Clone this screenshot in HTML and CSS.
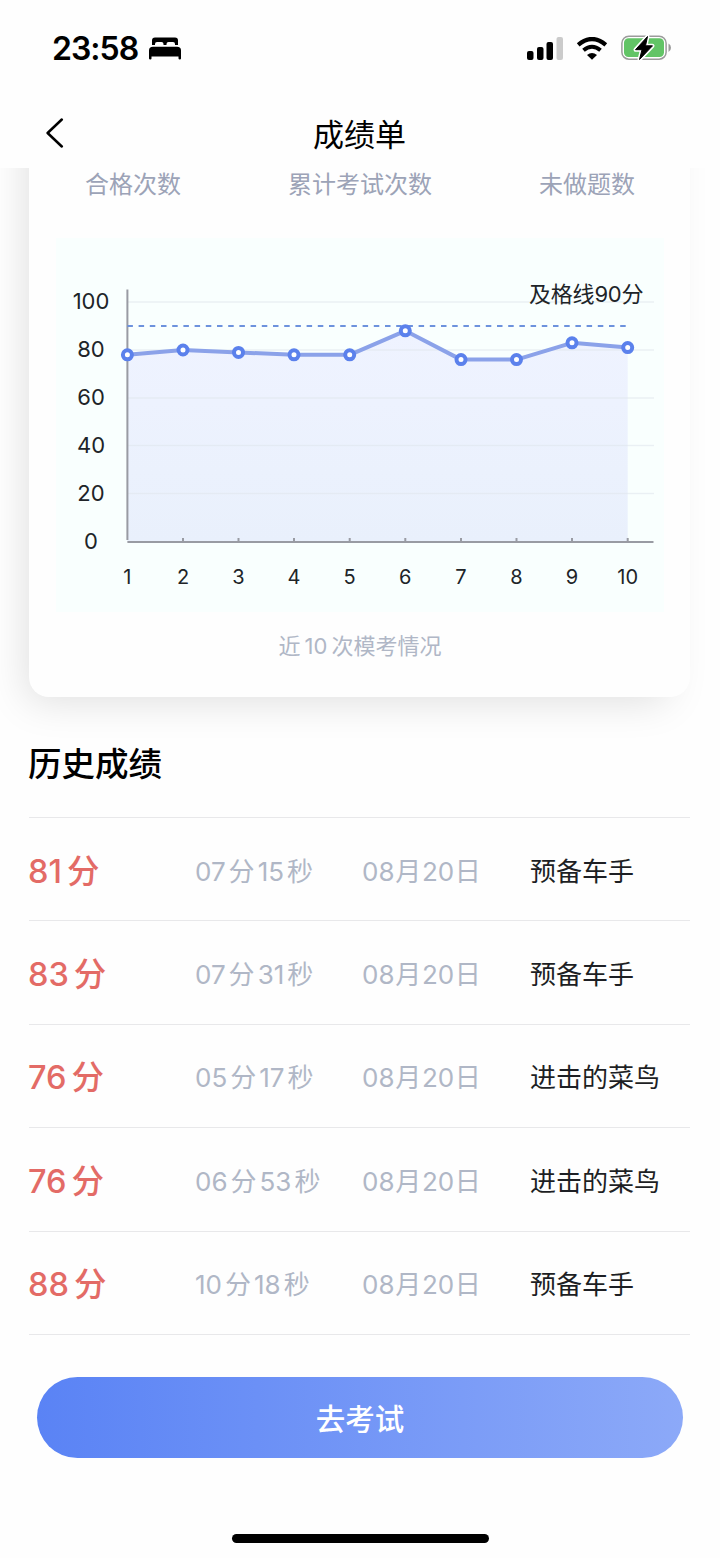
FILE: index.html
```html
<!DOCTYPE html>
<html lang="zh-CN">
<head>
    <meta charset="UTF-8">
    <meta name="viewport" content="width=device-width, initial-scale=1.0">
    <title>成绩单</title>
    <link rel="stylesheet" href="styles.css">
</head>
<body>
    <div class="status-bar">
        <div class="status-left">
            <span class="time">23:58</span>
            <svg width="32" height="23" viewBox="0 0 32 23">
                <path d="M3 8V3.500Q3 .5 6 .5H26Q29 .5 29 3.500V8H26V7Q26 5 24 5H19.500Q17.500 5 17.500 7V8H14.500V7Q14.500 5 12.500 5H8Q6 5 6 7V8Z"/>
                <path d="M4 9.800H28Q32 9.800 32 13.500V21.500Q32 22.500 30.800 22.500T29.500 21.500V19.500H2.500V21.500Q2.500 22.500 1.300 22.500T0 21.500V13.500Q0 9.800 4 9.800Z"/>
            </svg>
        </div>
        <div class="status-right">
            <svg width="36" height="23" viewBox="0 0 36 23">
                <rect x="0" y="14" width="6.500" height="9" rx="2"/>
                <rect x="10" y="10" width="6.500" height="13" rx="2"/>
                <rect x="19.500" y="5" width="6.500" height="18" rx="2"/>
                <rect x="29.500" y="0" width="6.500" height="23" rx="2" fill="#cbcbcb"/>
            </svg>
            <svg width="32" height="23" viewBox="0 0 32 23">
                <path d="M2.200 7.800Q16 -3.800 29.800 7.800" fill="none" stroke="#000" stroke-width="4.200"/>
                <path d="M7.500 13.300Q16 6.300 24.500 13.300" fill="none" stroke="#000" stroke-width="4"/>
                <path d="M16 22.800L11 18Q16 14 21 18Z"/>
            </svg>
            <svg width="50" height="28" viewBox="0 0 50 28">
                <rect x=".9" y="2.200" width="44.200" height="23" rx="7" fill="#fff" stroke="#9b9b9b" stroke-width="1.500"/>
                <rect x="3" y="4.300" width="40" height="18.800" rx="4.500" fill="#62c466"/>
                <path d="M47.500 9.500V18Q50 16.500 50 13.750T47.500 9.500Z" fill="#9b9b9b"/>
                <path d="M26.500 2.500L14.500 15.700H21L18.500 25.500L31.500 11.800H24.500Z" stroke="#fff" stroke-width="4" stroke-linejoin="round"/>
                <path d="M26.500 2.500L14.500 15.700H21L18.500 25.500L31.500 11.800H24.500Z" stroke="#000" stroke-linejoin="round"/>
            </svg>
        </div>
    </div>

    <div class="nav-bar">
        <svg class="back" width="18" height="30" viewBox="0 0 18 30">
            <path d="M15.800 1.500L1.600 15L15.800 28.500" fill="none" stroke="#000" stroke-width="2.500" stroke-linecap="round" stroke-linejoin="round"/>
        </svg>
        <h1>成绩单</h1>
    </div>

    <div class="summary">
        <div class="card">
            <div class="labels">
                <span>合格次数</span>
                <span>累计考试次数</span>
                <span>未做题数</span>
            </div>
            <svg class="chart" width="608" height="374" viewBox="56 238 608 374">
                <defs>
                    <linearGradient id="area" x1="0" y1="0" x2="0" y2="1">
                        <stop offset="0" stop-color="#eff3ff"/>
                        <stop offset="1" stop-color="#e9f0fc"/>
                    </linearGradient>
                </defs>
                <path fill="url(#area)" d="M127.400 354.800L183 350L238.500 352.400L294 354.800H349.700L405.300 330.800L461 359.600H516.500L572 342.800L627.700 347.600V542H127.400Z"/>
                <path class="grid" d="M128 302H654M128 350H654M128 398H654M128 445.500H654M128 493.500H654"/>
                <path class="axis" d="M127.400 289.500V540M127.400 542H653.500M183 542V538M238.500 542V538M294 542V538M349.700 542V538M405.300 542V538M461 542V538M516.500 542V538M572 542V538M627.700 542V538"/>
                <path class="pass-line" d="M127.400 326H628"/>
                <path class="line" d="M127.400 354.800L183 350L238.500 352.400L294 354.800H349.700L405.300 330.800L461 359.600H516.500L572 342.800L627.700 347.600"/>
                <g class="dots">
                    <circle cx="127.400" cy="354.800" r="4.500"/>
                    <circle cx="183" cy="350" r="4.500"/>
                    <circle cx="238.500" cy="352.400" r="4.500"/>
                    <circle cx="294" cy="354.800" r="4.500"/>
                    <circle cx="349.700" cy="354.800" r="4.500"/>
                    <circle cx="405.300" cy="330.800" r="4.500"/>
                    <circle cx="461" cy="359.600" r="4.500"/>
                    <circle cx="516.500" cy="359.600" r="4.500"/>
                    <circle cx="572" cy="342.800" r="4.500"/>
                    <circle cx="627.700" cy="347.600" r="4.500"/>
                </g>
                <g class="y-text">
                    <text x="91" y="308.500">100</text>
                    <text x="91" y="356.500">80</text>
                    <text x="91" y="404.500">60</text>
                    <text x="91" y="452.500">40</text>
                    <text x="91" y="500.500">20</text>
                    <text x="91" y="548.500">0</text>
                </g>
                <g class="x-text">
                    <text x="127.400" y="584">1</text>
                    <text x="183" y="584">2</text>
                    <text x="238.500" y="584">3</text>
                    <text x="294" y="584">4</text>
                    <text x="349.700" y="584">5</text>
                    <text x="405.300" y="584">6</text>
                    <text x="461" y="584">7</text>
                    <text x="516.500" y="584">8</text>
                    <text x="572" y="584">9</text>
                    <text x="627.700" y="584">10</text>
                </g>
                <text class="pass-text" x="529" y="301.500">及格线90分</text>
            </svg>
            <p class="caption">近<b>10</b>次模考情况</p>
        </div>
    </div>

    <div class="history">
        <h2>历史成绩</h2>
        <ul>
            <li><span class="score">81<i>分</i></span><span class="used">07<i>分</i>15<i>秒</i></span><span class="date">08<i>月</i>20<i>日</i></span><span class="rank">预备车手</span></li>
            <li><span class="score">83<i>分</i></span><span class="used">07<i>分</i>31<i>秒</i></span><span class="date">08<i>月</i>20<i>日</i></span><span class="rank">预备车手</span></li>
            <li><span class="score">76<i>分</i></span><span class="used">05<i>分</i>17<i>秒</i></span><span class="date">08<i>月</i>20<i>日</i></span><span class="rank">进击的菜鸟</span></li>
            <li><span class="score">76<i>分</i></span><span class="used">06<i>分</i>53<i>秒</i></span><span class="date">08<i>月</i>20<i>日</i></span><span class="rank">进击的菜鸟</span></li>
            <li><span class="score">88<i>分</i></span><span class="used">10<i>分</i>18<i>秒</i></span><span class="date">08<i>月</i>20<i>日</i></span><span class="rank">预备车手</span></li>
        </ul>
    </div>

    <button class="exam-btn" type="button">去考试</button>
    <div class="home-indicator"></div>
</body>
</html>
```
FILE: styles.css
```css
* {
    box-sizing: border-box;
    margin: 0;
    padding: 0;
}
body {
    width: 720px;
    height: 1558px;
    overflow: hidden;
    background-color: #fefefe;
    font-family: Inter, "Noto Sans CJK SC", sans-serif;
    color: #000;
}
svg {
    display: block;
}
i, b {
    font-style: normal;
    font-weight: inherit;
}
.status-bar {
    display: flex;
    justify-content: space-between;
    height: 96px;
    padding: 0 49px 0 52px;
    align-items: center;
}
.status-left, .status-right {
    display: flex;
    align-items: center;
}
.status-left { gap: 11px; }
.status-right { gap: 13px; }
.time {
    padding-top: 1px;
    font-size: 32px;
    font-weight: 600;
    letter-spacing: -1px;
    line-height: 40px;
}
.nav-bar {
    display: grid;
    grid-template-columns: 60px 1fr 60px;
    align-items: center;
    height: 72px;
    padding: 6px 0 0;
}
.back {
    margin-left: 46px;
    margin-top: -4px;
}
h1 {
    margin-left: -1px;
    font-size: 31px;
    font-weight: 400;
    line-height: 40px;
    text-align: center;
}
/* clips the scrolled card under the nav bar */
.summary {
    height: 577px;
    padding: 0 30px 0 29px;
    overflow: hidden;
}
.card {
    height: 649px;
    margin-top: -120px;
    padding: 121px 26px 0 27px;
    background-color: #fefefe;
    border-radius: 20px;
    box-shadow: -12px 14px 40px -10px rgba(0, 0, 0, .13);
}
.labels {
    display: flex;
    justify-content: space-between;
    height: 69px;
    padding: 0 29px;
    font-size: 24px;
    line-height: 32px;
    color: #9ca3b7;
}
.chart {
    background-color: #f9fffe;
}
.grid { stroke: #dfe6ec; stroke-opacity: .6; stroke-width: 1.500; }
.axis { fill: none; stroke: #999ba3; stroke-width: 2; }
.pass-line { stroke: #6d92dd; stroke-width: 2; stroke-dasharray: 5.500 5.700; }
.line { fill: none; stroke: #8ba2e9; stroke-width: 4; stroke-linejoin: round; }
.dots { fill: #fff; stroke: #5b81ec; stroke-width: 4; }
.y-text, .x-text { fill: #202428; text-anchor: middle; }
.y-text { font-size: 22px; }
.x-text { font-size: 20px; }
.pass-text { font-size: 22px; letter-spacing: -.2px; fill: #202428; }
.caption {
    padding-top: 18px;
    font-size: 22px;
    line-height: 32px;
    text-align: center;
    color: #b0b7c6;
}
.caption b { margin: 0 4px; }
.history {
    padding: 0 30px 0 29px;
}
h2 {
    height: 72px;
    margin-left: -1px;
    font-size: 33.500px;
    font-weight: 500;
    line-height: 38px;
}
ul {
    list-style: none;
    border-top: 1px solid #e8e8ea;
}
li {
    display: grid;
    grid-template-columns: 167px 167px 167px 1fr;
    align-items: center;
    height: 103.400px;
    padding-top: 5px;
    border-bottom: 1px solid #e8e8ea;
    font-size: 26px;
    line-height: 40px;
}
.score {
    margin-left: -1px;
    font-size: 32.500px;
    font-weight: 500;
    color: #e36b66;
}
.score i { margin-left: 5px; }
.used, .date {
    margin-left: -1px;
    color: #b0b7c6;
}
.used i { margin: 0 3px; }
.date i { margin: 0 .7px; }
.rank { color: #1d1f24; }
.exam-btn {
    display: block;
    width: 646px;
    height: 81px;
    margin: 42px 0 0 37px;
    border: none;
    border-radius: 41px;
    background: linear-gradient(90deg, #5a83f5, #8ca9f8);
    font-family: inherit;
    font-size: 29.500px;
    font-weight: 500;
    color: #fff;
}
.home-indicator {
    width: 257px;
    height: 9px;
    margin: 76px auto 0;
    border-radius: 5px;
    background-color: #000;
}
```
